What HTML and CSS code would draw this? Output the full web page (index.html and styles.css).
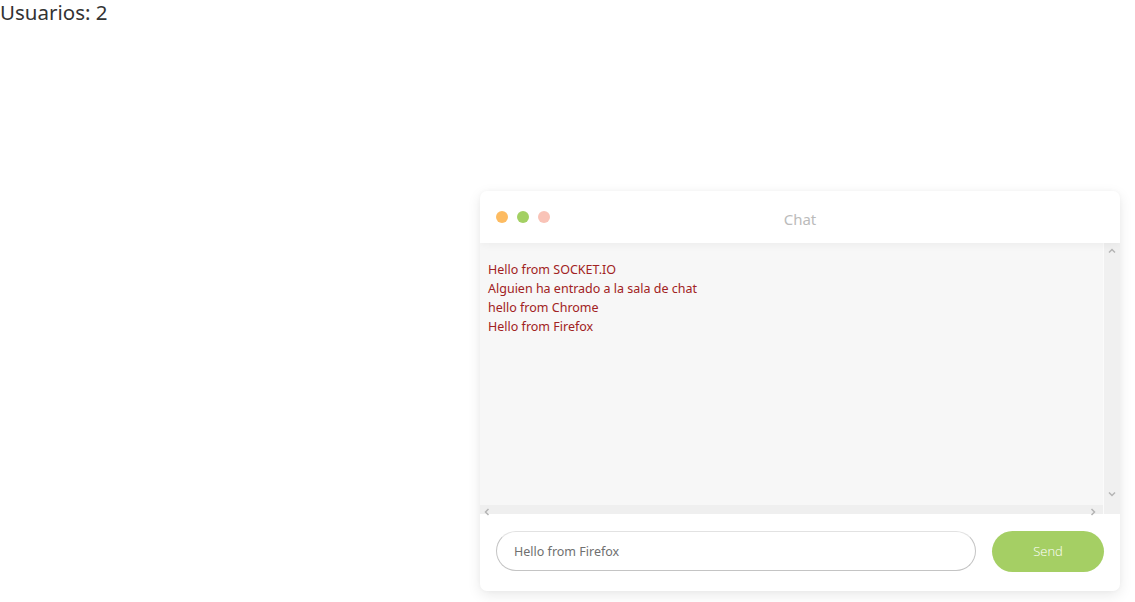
FILE: index.html
```html
<!DOCTYPE html>
<html lang="es">
<head>
<meta charset="utf-8">
<title>Chat</title>
<link rel="stylesheet" href="styles.css">
</head>
<body>
<div class="users">Usuarios: 2</div>
<div class="stage">
  <div class="chat">
    <div class="chat-header">
      <div class="dots">
        <span class="dot dot-orange"></span>
        <span class="dot dot-green"></span>
        <span class="dot dot-pink"></span>
      </div>
      <div class="title">Chat</div>
    </div>
    <div class="chat-body">
      <div class="body-main">
        <div class="messages">
          <div class="msg">Hello from SOCKET.IO</div>
          <div class="msg">Alguien ha entrado a la sala de chat</div>
          <div class="msg">hello from Chrome</div>
          <div class="msg">Hello from Firefox</div>
        </div>
        <div class="hscroll">
          <svg class="arrow" width="6" height="8" viewBox="0 0 6 8"><path d="M4.5 1 L1.5 4 L4.5 7" fill="none" stroke="#b4b4b4" stroke-width="1.5"/></svg>
          <svg class="arrow" width="6" height="8" viewBox="0 0 6 8"><path d="M1.5 1 L4.5 4 L1.5 7" fill="none" stroke="#b4b4b4" stroke-width="1.5"/></svg>
        </div>
      </div>
      <div class="vscroll">
        <svg class="arrow" width="8" height="6" viewBox="0 0 8 6"><path d="M1 4.5 L4 1.5 L7 4.5" fill="none" stroke="#b4b4b4" stroke-width="1.5"/></svg>
        <svg class="arrow" width="8" height="6" viewBox="0 0 8 6"><path d="M1 1.5 L4 4.5 L7 1.5" fill="none" stroke="#b4b4b4" stroke-width="1.5"/></svg>
      </div>
    </div>
    <div class="chat-footer">
      <div class="input">Hello from Firefox</div>
      <button class="send">Send</button>
    </div>
  </div>
</div>
</body>
</html>
```
FILE: styles.css
```css
html, body {
  margin: 0;
  padding: 0;
  background: #ffffff;
}
body {
  font-family: "Noto Sans", "Open Sans", sans-serif;
  width: 1135px;
  height: 602px;
  overflow: hidden;
}
.users {
  font-size: 20.5px;
  line-height: 24px;
  color: #333333;
}
.stage {
  display: flex;
  justify-content: flex-end;
  padding-right: 15px;
  padding-top: 167px;
}
.chat {
  width: 640px;
  height: 400px;
  border-radius: 7px;
  background: #ffffff;
  box-shadow: 0 4px 14px rgba(0, 0, 0, 0.09), 0 0 4px rgba(0, 0, 0, 0.03);
  display: flex;
  flex-direction: column;
  overflow: hidden;
}
.chat-header {
  height: 52px;
  flex: none;
  position: relative;
  display: flex;
  align-items: center;
  padding-left: 16px;
  z-index: 1;
  box-shadow: 0 2px 8px rgba(0, 0, 0, 0.045);
}
.dots {
  display: flex;
  gap: 9px;
}
.dot {
  width: 12px;
  height: 12px;
  border-radius: 50%;
}
.dot-orange { background: #fdbb61; }
.dot-green { background: #a3d063; }
.dot-pink { background: #f9c3b7; }
.title {
  position: absolute;
  left: 0;
  right: 0;
  top: 17px;
  text-align: center;
  font-size: 15px;
  line-height: 22px;
  color: #bbbbbb;
  pointer-events: none;
}
.chat-body {
  height: 271px;
  flex: none;
  display: flex;
  background: #f7f7f7;
}
.body-main {
  flex: 1;
  display: flex;
  flex-direction: column;
  border-right: 1px solid #fbfbfb;
}
.messages {
  flex: 1;
  padding: 17px 8px 0;
  font-size: 12.5px;
  line-height: 19px;
  color: #a12222;
}
.hscroll {
  height: 9px;
  background: #efefef;
  display: flex;
  justify-content: space-between;
  align-items: center;
  padding: 0 7px 0 4px;
}
.hscroll .arrow { margin-top: 5px; }
.vscroll {
  width: 16px;
  flex: none;
  background: #f0f0f0;
  display: flex;
  flex-direction: column;
  justify-content: space-between;
  align-items: center;
  padding: 5px 0 17px;
  box-sizing: border-box;
}
.chat-footer {
  flex: 1;
  display: flex;
  align-items: center;
  padding: 0 16px 3px;
  gap: 16px;
}
.input {
  width: 480px;
  height: 40px;
  box-sizing: border-box;
  border: 1px solid #c4c4c4;
  border-top-color: #e2e2e2;
  border-radius: 20px;
  padding-left: 17px;
  display: flex;
  align-items: center;
  font-size: 12.5px;
  color: #707070;
}
.send {
  width: 112px;
  height: 41px;
  border: none;
  border-radius: 21px;
  background: #a5cf64;
  color: #ffffff;
  font-family: "Open Sans", "Noto Sans", sans-serif;
  font-weight: 300;
  font-size: 13px;
  padding: 0;
}
```
